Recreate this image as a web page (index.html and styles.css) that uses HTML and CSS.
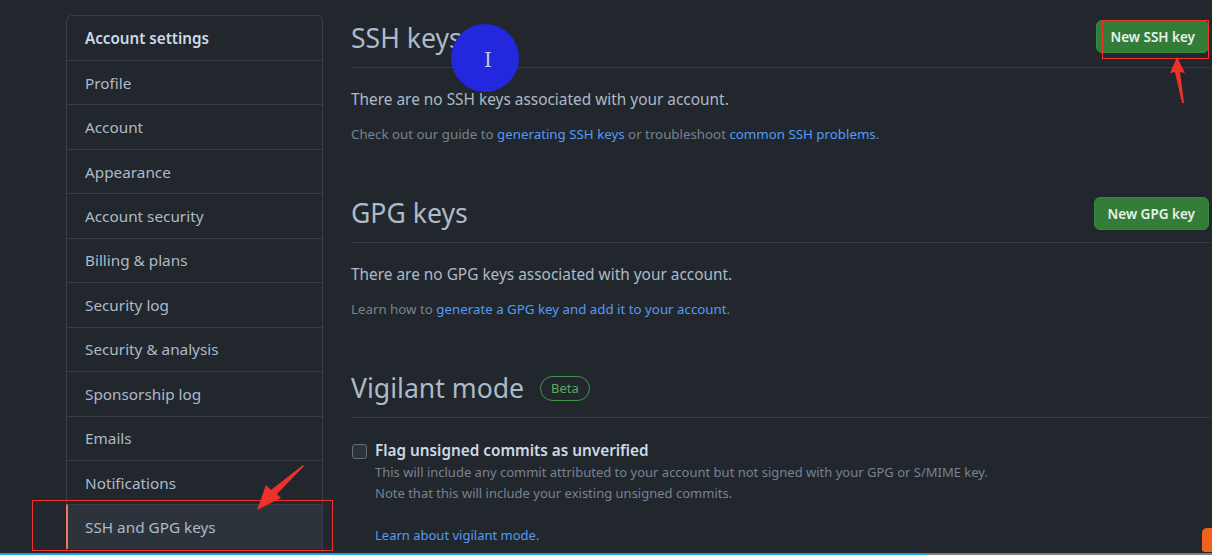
FILE: index.html
```html
<!DOCTYPE html>
<html lang="en">
<head>
<meta charset="utf-8">
<title>SSH and GPG keys</title>
<link rel="stylesheet" href="styles.css">
</head>
<body>
<div class="page">
  <nav class="menu">
    <div class="menu-head">Account settings</div>
    <a class="menu-item">Profile</a>
    <a class="menu-item">Account</a>
    <a class="menu-item">Appearance</a>
    <a class="menu-item">Account security</a>
    <a class="menu-item">Billing &amp; plans</a>
    <a class="menu-item">Security log</a>
    <a class="menu-item">Security &amp; analysis</a>
    <a class="menu-item">Sponsorship log</a>
    <a class="menu-item">Emails</a>
    <a class="menu-item">Notifications</a>
    <a class="menu-item selected">SSH and GPG keys</a>
  </nav>
  <main class="content">
    <section class="block">
      <div class="subhead">
        <h2 class="subhead-title">SSH keys</h2>
        <button class="btn-primary btn-up">New SSH key</button>
      </div>
      <p class="lead">There are no SSH keys associated with your account.</p>
      <p class="note">Check out our guide to <a class="link">generating SSH keys</a> or troubleshoot <a class="link">common SSH problems</a>.</p>
    </section>
    <section class="block">
      <div class="subhead">
        <h2 class="subhead-title">GPG keys</h2>
        <button class="btn-primary">New GPG key</button>
      </div>
      <p class="lead">There are no GPG keys associated with your account.</p>
      <p class="note">Learn how to <a class="link">generate a GPG key and add it to your account</a>.</p>
    </section>
    <section class="block">
      <div class="subhead">
        <h2 class="subhead-title">Vigilant mode <span class="label">Beta</span></h2>
      </div>
      <div class="check-row">
        <span class="checkbox"></span>
        <div class="check-body">
          <div class="check-label">Flag unsigned commits as unverified</div>
          <div class="check-note">This will include any commit attributed to your account but not signed with your GPG or S/MIME key.</div>
          <div class="check-note">Note that this will include your existing unsigned commits.</div>
          <a class="link check-link">Learn about vigilant mode.</a>
        </div>
      </div>
    </section>
  </main>
</div>

<div class="cursor-dot"><span class="ibeam">I</span></div>
<div class="mark mark-btn"></div>
<div class="mark mark-nav"></div>
<svg class="arrow arrow-up" width="40" height="60" viewBox="0 0 40 60">
  <polygon points="22,2 30,18 25,17 29,48 27,48 20,17 15,18" fill="#f0302a"/>
</svg>
<svg class="arrow arrow-nav" width="70" height="60" viewBox="0 0 70 60">
  <polygon points="50,2 51,3 24,31 28,35 4,47 13,22 18,27" fill="#f0302a"/>
</svg>
<div class="progress"><div class="progress-bar"></div></div>
<div class="corner-badge"></div>
</body>
</html>
```
FILE: styles.css
```css
html, body {
  margin: 0;
  padding: 0;
  background: #22272e;
  height: 100%;
  overflow: hidden;
}
body {
  font-family: "Noto Sans", "Liberation Sans", sans-serif;
  color: #adbac7;
}
.page {
  display: flex;
  gap: 28px;
  padding: 15px 2px 0 66px;
}
.menu {
  width: 257px;
  flex: none;
  box-sizing: border-box;
  border: 1px solid #373e47;
  border-bottom: 0;
  border-radius: 6px 6px 0 0;
  display: flex;
  flex-direction: column;
}
.menu-head {
  height: 44px;
  display: flex;
  align-items: center;
  padding: 0 18px;
  font-size: 15.2px;
  font-weight: 600;
  color: #cdd9e5;
}
.menu-item {
  height: 43.45px;
  border-top: 1px solid #373e47;
  display: flex;
  align-items: center;
  padding: 0 18px;
  font-size: 15.3px;
  color: #adbac7;
}
.menu-item.selected {
  background: #2d333b;
  border-left: 2px solid #ec775c;
  padding-left: 17px;
  margin-left: -1px;
}
.content {
  flex: 1;
  min-width: 0;
  padding-top: 3px;
}
.block {
  margin-bottom: 49px;
}
.subhead {
  display: flex;
  align-items: center;
  justify-content: space-between;
  padding-bottom: 8px;
  border-bottom: 1px solid #373e47;
  min-height: 41px;
}
.subhead-title {
  margin: 0;
  font-size: 26.6px;
  font-weight: 400;
  line-height: 41px;
  color: #adbac7;
  display: flex;
  align-items: center;
  gap: 16px;
}
.btn-primary {
  font-family: inherit;
  font-size: 13.5px;
  font-weight: 600;
  color: #e8f0ea;
  background: #347d39;
  border: 1px solid #3b8640;
  border-radius: 6px;
  height: 33px;
  padding: 0 13px;
  margin-right: 1px;
}
.btn-up {
  margin-top: -4px;
}
.lead {
  margin: 21px 0 0;
  font-size: 15.4px;
  line-height: 22px;
  color: #adbac7;
}
.note {
  margin: 13px 0 0;
  font-size: 13.3px;
  line-height: 20px;
  color: #768390;
}
.link {
  color: #539bf5;
  text-decoration: none;
}
.label {
  font-size: 13px;
  line-height: 23px;
  padding: 0 10px;
  border: 1px solid #46954a;
  border-radius: 13px;
  color: #57ab5a;
}
.check-row {
  display: flex;
  gap: 8px;
  margin-top: 21px;
}
.checkbox {
  width: 13px;
  height: 13px;
  margin: 5px 0 0 1px;
  border: 1px solid #636e7b;
  border-radius: 3px;
  background: #2d333b;
  flex: none;
}
.check-label {
  font-size: 15.3px;
  font-weight: 600;
  line-height: 23px;
  color: #cdd9e5;
}
.check-note {
  font-size: 13px;
  line-height: 21px;
  color: #768390;
}
.check-link {
  display: block;
  margin-top: 21px;
  font-size: 13px;
  line-height: 20px;
}
.cursor-dot {
  position: absolute;
  left: 451px;
  top: 24px;
  width: 68px;
  height: 68px;
  border-radius: 50%;
  background: #2327dd;
  display: flex;
  align-items: center;
  justify-content: center;
}
.ibeam {
  font-family: "DejaVu Serif", serif;
  font-size: 20px;
  color: #c9cde0;
  margin: 4px 0 0 6px;
}
.mark {
  position: absolute;
  border: 1px solid #f0302a;
}
.mark-btn {
  left: 1102px;
  top: 20px;
  width: 105px;
  height: 37px;
}
.mark-nav {
  left: 32px;
  top: 500px;
  width: 299px;
  height: 49px;
}
.arrow {
  position: absolute;
}
.arrow-up {
  left: 1155px;
  top: 55px;
}
.arrow-nav {
  left: 253px;
  top: 463px;
}
.progress {
  position: absolute;
  left: 0;
  right: 0;
  bottom: 0;
  height: 2px;
  background: #7d7d7d;
}
.progress-bar {
  width: 926px;
  height: 2px;
  background: #1a9fe0;
}
.corner-badge {
  position: absolute;
  right: 0;
  bottom: 3px;
  width: 10px;
  height: 24px;
  background: #f0611e;
  border-radius: 5px 0 0 3px;
}
```
